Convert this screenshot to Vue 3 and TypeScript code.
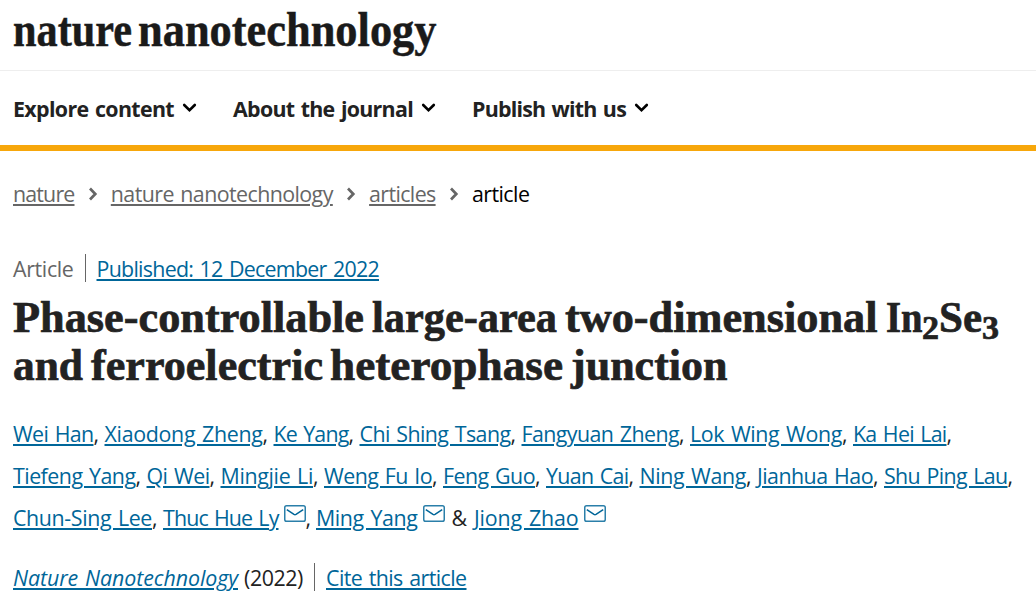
<script setup lang="ts">
interface Author {
  name: string
  width: number
  mail?: boolean
  sep: string
  sepWidth: number
}

const a = (name: string, width: number, sep = ',', sepWidth = 11, mail = false): Author => ({
  name,
  width,
  sep,
  sepWidth,
  mail,
})

const nav = [
  { label: 'Explore content', width: 161 },
  { label: 'About the journal', width: 180 },
  { label: 'Publish with us', width: 154 },
]

const crumbs = [
  { label: 'nature', width: 61.5 },
  { label: 'nature nanotechnology', width: 222 },
  { label: 'articles', width: 66.5 },
]

const authorRows: Author[][] = [
  [
    a('Wei Han', 80.5), a('Xiaodong Zheng', 158), a('Ke Yang', 75), a('Chi Shing Tsang', 151),
    a('Fangyuan Zheng', 157.5), a('Lok Wing Wong', 152), a('Ka Hei Lai', 93.5),
  ],
  [
    a('Tiefeng Yang', 122.5), a('Qi Wei', 63), a('Mingjie Li', 92.5), a('Weng Fu Io', 108),
    a('Feng Guo', 92), a('Yuan Cai', 82.5), a('Ning Wang', 106.5), a('Jianhua Hao', 116),
    a('Shu Ping Lau', 123.5),
  ],
  [
    a('Chun-Sing Lee', 139), a('Thuc Hue Ly', 115.5, ',', 10.5, true),
    a('Ming Yang', 101.5, ' &', 29.5, true), a('Jiong Zhao', 104.5, '', 0, true),
  ],
]

/* Tracks a run of text so that it fills the given width. */
const vTrack = {
  mounted(el: HTMLElement, { value }: { value: number }) {
    const natural = el.getBoundingClientRect().width
    el.style.letterSpacing = `${(value - natural) / (el.textContent ?? ' ').length}px`
  },
}

/* Condenses display type to the given width. */
const vCondense = {
  mounted(el: HTMLElement, { value }: { value: number }) {
    const natural = el.getBoundingClientRect().width
    el.style.transform = `scaleX(${value / natural})`
    el.style.marginRight = `${value - natural}px`
  },
}
</script>

<template>
  <div class="page">
    <header>
      <div class="brand">
        <span v-condense="119" class="display">nature</span>
        <span v-condense="298.5" class="display">nanotechnology</span>
      </div>
      <nav>
        <a v-for="item in nav" :key="item.label" class="nav-item">
          <span v-track="item.width">{{ item.label }}</span>
          <svg width="15" height="10" viewBox="0 0 15 10">
            <path d="M2.2 2l5.3 5.2L12.8 2" fill="none" stroke="#000" stroke-width="2.6" stroke-linecap="round" />
          </svg>
        </a>
      </nav>
    </header>

    <main>
      <div class="crumbs">
        <template v-for="c in crumbs" :key="c.label">
          <a v-track="c.width">{{ c.label }}</a>
          <svg class="arrow" width="10" height="14" viewBox="0 0 10 14">
            <path d="M2 1.5L7.3 7 2 12.5" fill="none" stroke="#666" stroke-width="2.7" />
          </svg>
        </template>
        <span v-track="57.5" class="current">article</span>
      </div>

      <div class="meta">
        <span v-track="60.5" class="kind">Article</span>
        <i class="bar"></i>
        <a v-track="282.5">Published: 12 December 2022</a>
      </div>

      <h1>
        <span class="title-row">
          <span v-condense="351" class="display">Phase-controllable</span>
          <span v-condense="185" class="display">large-area</span>
          <span v-condense="312.5" class="display">two-dimensional</span>
          <span class="formula">
            <span v-condense="36.5" class="display">In</span><sub v-condense="17" class="display">2</sub><span v-condense="43" class="display">Se</span><sub v-condense="17" class="display">3</sub>
          </span>
        </span>
        <span class="title-row second">
          <span v-condense="70" class="display">and</span>
          <span v-condense="232" class="display">ferroelectric</span>
          <span v-condense="233" class="display">heterophase</span>
          <span v-condense="156.5" class="display">junction</span>
        </span>
      </h1>

      <div class="authors">
        <div v-for="(row, i) in authorRows" :key="i" class="author-row">
          <template v-for="p in row" :key="p.name">
            <a v-track="p.width">{{ p.name }}</a>
            <svg v-if="p.mail" class="mail" width="22" height="17" viewBox="0 0 22 17">
              <rect x=".75" y=".75" width="20.5" height="15.5" rx="1.8" fill="none" stroke="#2b7fa9" stroke-width="1.5" />
              <path d="M2.8 4.6L10 9.4q1 .6 2 0l7.2-4.8" fill="none" stroke="#069" stroke-width="1.5" />
            </svg>
            <span class="sep" :style="{ width: p.sepWidth + 'px' }">{{ p.sep }}</span>
          </template>
        </div>
      </div>

      <div class="cite">
        <a v-track="225" class="journal">Nature Nanotechnology</a>
        <span v-track="59" class="year">(2022)</span>
        <i class="bar"></i>
        <a v-track="140.5">Cite this article</a>
      </div>
    </main>
  </div>
</template>

<style>
body {
  margin: 0;
  background: #fff;
}
</style>

<style scoped>
.page {
  width: 1036px;
  height: 596px;
  overflow: hidden;
  background: #fff;
  color: #222;
  font: 21.4px/42px "Open Sans", "Noto Sans", sans-serif;
  word-spacing: 1.5px;
  white-space: pre;
}

a {
  color: #069;
  text-decoration: underline;
  text-decoration-thickness: 2px;
  text-underline-offset: 2px;
}

svg {
  display: block;
  flex: none;
}

.display {
  display: inline-block;
  flex: none;
  transform-origin: 0 50%;
  font-family: "Liberation Serif", serif;
  font-weight: 700;
}

.brand {
  display: flex;
  gap: 6px;
  height: 70px;
  padding-left: 13px;
  border-bottom: 1px solid #eee;
  color: #1a1a1a;
  font-size: 49px;
  line-height: 59px;
  -webkit-text-stroke: 0.5px #1a1a1a;
}

nav {
  display: flex;
  height: 74px;
  padding-left: 13px;
  border-bottom: 6px solid #f7a70b;
}

.nav-item {
  display: flex;
  align-items: center;
  margin-right: 36px;
  color: #222;
  font-weight: 700;
  text-decoration: none;
}

.nav-item span {
  padding-top: 2px;
}

.nav-item svg {
  margin: -1px 0 0 8px;
}

.crumbs {
  display: flex;
  align-items: center;
  height: 42px;
  margin: 22px 0 0 13px;
}

.crumbs a {
  color: #666;
}

.arrow {
  margin: 0 13.3px 0 13px;
}

.current {
  color: #000;
}

.meta,
.cite {
  display: flex;
  align-items: center;
  height: 42px;
  margin-left: 13px;
}

.meta {
  margin-top: 33px;
}

.kind {
  color: #666;
}

.bar {
  width: 1px;
  height: 28px;
  margin: -3px 11px 0;
  background: #666;
}

h1 {
  margin: 3px 0 0 13px;
  font-size: 45px;
  line-height: 48px;
  -webkit-text-stroke: 0.7px #222;
}

.title-row {
  display: flex;
  gap: 8px;
  height: 48px;
}

.second {
  gap: 7.5px;
}

.formula {
  display: flex;
}

.formula sub {
  position: relative;
  top: 11px;
  font-size: 34px;
  vertical-align: baseline;
}

.authors {
  margin: 24px 0 0 13px;
}

.author-row {
  display: flex;
  height: 42px;
}

.sep {
  flex: none;
}

.mail {
  margin: 8px 0 0 5px;
}

.cite {
  margin-top: 18px;
}

.journal {
  font-style: italic;
}

.year {
  margin-left: 6px;
}
</style>
